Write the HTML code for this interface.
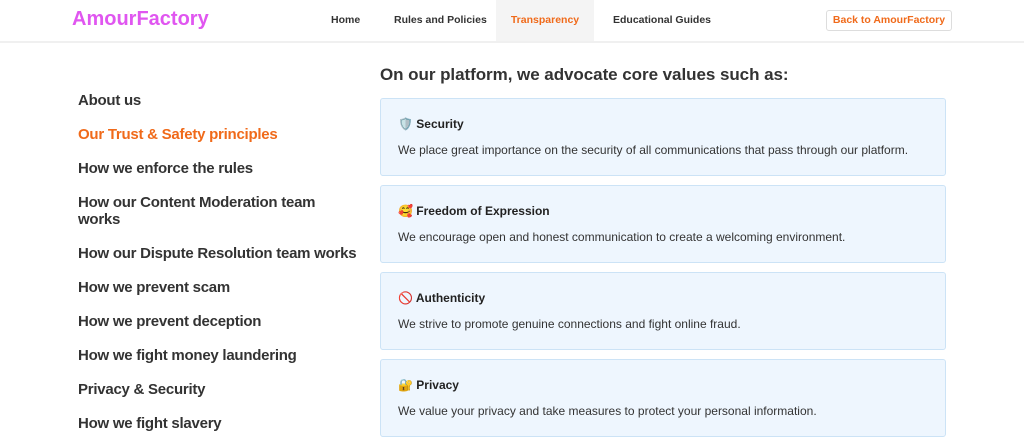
<!DOCTYPE html>
<html><head><meta charset="utf-8"><style>
*{margin:0;padding:0;box-sizing:border-box}
body{width:1024px;height:446px;overflow:hidden;background:#fff;font-family:"Liberation Sans","DejaVu Sans",sans-serif;color:#222}
.nav{position:absolute;left:0;top:0;width:1024px;height:43px;border-bottom:2px solid #f0f0f0;background:#fff}
.logo{position:absolute;left:72px;top:8px;font-size:20px;font-weight:bold;color:#e056f0}
.ni{position:absolute;top:0;height:41px;line-height:41px;font-size:10.5px;font-weight:bold;color:#333}
.tr{background:#f4f4f4;color:#f06a1a;text-align:center;width:98px;left:496px}
.btn{position:absolute;left:826px;top:10px;width:126px;height:21px;border:1px solid #ddd;border-radius:3px;color:#f06a1a;font-size:10.5px;font-weight:bold;text-align:center;line-height:19px}
.side{position:absolute;left:78px;font-size:15px;font-weight:bold;color:#333;line-height:17px;width:285px;letter-spacing:-0.25px}
h1{position:absolute;left:380px;top:65px;font-size:17px;font-weight:bold;color:#333;letter-spacing:-0.05px}
.card{position:absolute;left:380px;width:566px;height:78px;background:#eef6fe;border:1px solid #cce3f6;border-radius:3px}
.card b{position:absolute;left:17px;top:18px;font-size:12px;color:#222}
.card p{position:absolute;left:17px;top:44px;font-size:12px;color:#333}
</style></head><body>
<div class="nav">
<div class="logo">AmourFactory</div>
<div class="ni" style="left:331px">Home</div>
<div class="ni" style="left:394px">Rules and Policies</div>
<div class="ni tr">Transparency</div>
<div class="ni" style="left:613px">Educational Guides</div>
<div class="btn">Back to AmourFactory</div>
</div>
<div class="side" style="top:92px">About us</div>
<div class="side" style="top:126px;color:#f06a1a">Our Trust &amp; Safety principles</div>
<div class="side" style="top:160px">How we enforce the rules</div>
<div class="side" style="top:194px;width:250px">How our Content Moderation team works</div>
<div class="side" style="top:245px;width:300px">How our Dispute Resolution team works</div>
<div class="side" style="top:279px">How we prevent scam</div>
<div class="side" style="top:313px">How we prevent deception</div>
<div class="side" style="top:347px">How we fight money laundering</div>
<div class="side" style="top:381px">Privacy &amp; Security</div>
<div class="side" style="top:415px">How we fight slavery</div>
<h1>On our platform, we advocate core values such as:</h1>
<div class="card" style="top:98px"><b>🛡️ Security</b><p>We place great importance on the security of all communications that pass through our platform.</p></div>
<div class="card" style="top:185px"><b>🥰 Freedom of Expression</b><p>We encourage open and honest communication to create a welcoming environment.</p></div>
<div class="card" style="top:272px"><b>🚫 Authenticity</b><p>We strive to promote genuine connections and fight online fraud.</p></div>
<div class="card" style="top:359px"><b>🔐 Privacy</b><p>We value your privacy and take measures to protect your personal information.</p></div>
</body></html>
